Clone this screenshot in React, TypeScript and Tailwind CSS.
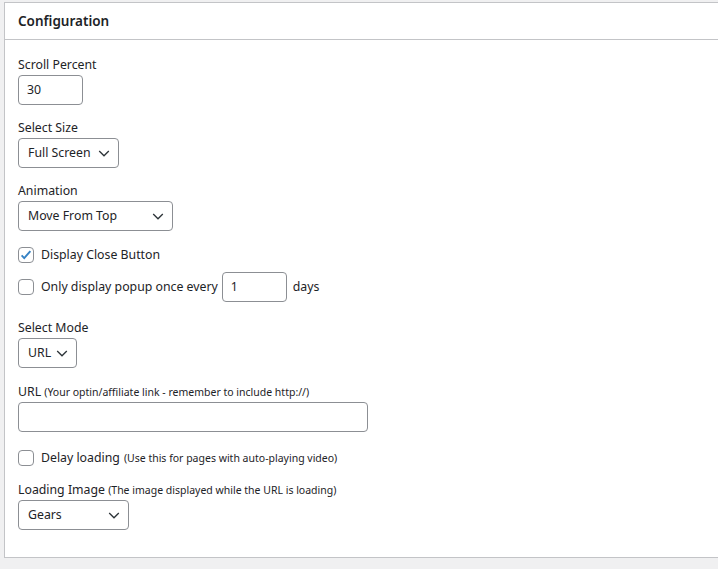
function Chevron() {
  return (
    <svg width="16" height="16" viewBox="0 0 20 20" className="shrink-0">
      <path d="M4 7.5l6 6 6-6" fill="none" stroke="#2c3338" strokeWidth="1.6" />
    </svg>
  );
}

function Select({ label, w }: { label: string; w: string }) {
  return (
    <div className={`${w} h-[30px] flex items-center justify-between border border-[#8c8f94] rounded-[4px] pl-[9px] pr-[6px] bg-white`}>
      <span>{label}</span>
      <Chevron />
    </div>
  );
}

function Box({ checked }: { checked?: boolean }) {
  return (
    <div className="w-4 h-4 border border-[#8c8f94] rounded-[4px] bg-white flex items-center justify-center shrink-0">
      {checked && (
        <svg width="14" height="14" viewBox="0 0 16 16">
          <path d="M3 8.5l3 3 7-8" fill="none" stroke="#3582c4" strokeWidth="2.2" />
        </svg>
      )}
    </div>
  );
}

export default function App() {
  return (
    <div className="w-[718px] h-[569px] bg-[#f0f0f1] pt-[2px] pl-[4px] text-[12.3px] text-[#1d2327]" style={{ fontFamily: '"Noto Sans", "Open Sans", sans-serif' }}>
      <section className="h-[556px] bg-white border border-[#c3c4c7] border-r-0">
        <h2 className="h-[37px] flex items-center px-[13px] border-b border-[#c3c4c7] text-[13.5px] font-semibold">Configuration</h2>
        <div className="px-[13px] pt-[17px] leading-[16px]">
          <div>Scroll Percent</div>
          <div className="mt-[2px] w-[65px] h-[30px] border border-[#8c8f94] rounded-[4px] flex items-center px-[8px]">30</div>

          <div className="mt-[15px]">Select Size</div>
          <div className="mt-[2px]"><Select label="Full Screen" w="w-[101px]" /></div>

          <div className="mt-[15px]">Animation</div>
          <div className="mt-[2px]"><Select label="Move From Top" w="w-[155px]" /></div>

          <div className="mt-[16px] flex items-center gap-[7px]"><Box checked />Display Close Button</div>

          <div className="mt-[9px] h-[30px] flex items-center gap-[7px]">
            <Box />
            <span>Only display popup once every</span>
            <div className="ml-[-3px] w-[65px] h-[30px] border border-[#8c8f94] rounded-[4px] flex items-center px-[8px]">1</div>
            <span className="ml-[-1px]">days</span>
          </div>

          <div className="mt-[18px]">Select Mode</div>
          <div className="mt-[2px]"><Select label="URL" w="w-[59px]" /></div>

          <div className="mt-[16px]">URL <span className="text-[10.5px]">(Your optin/affiliate link - remember to include http://)</span></div>
          <div className="mt-[2px] w-[350px] h-[30px] border border-[#8c8f94] rounded-[4px]" />

          <div className="mt-[18px] flex items-center gap-[7px]"><Box />Delay loading <span className="text-[10.5px] -ml-[3px]">(Use this for pages with auto-playing video)</span></div>

          <div className="mt-[16px]">Loading Image <span className="text-[10.5px]">(The image displayed while the URL is loading)</span></div>
          <div className="mt-[2px]"><Select label="Gears" w="w-[111px]" /></div>
        </div>
      </section>
    </div>
  );
}
